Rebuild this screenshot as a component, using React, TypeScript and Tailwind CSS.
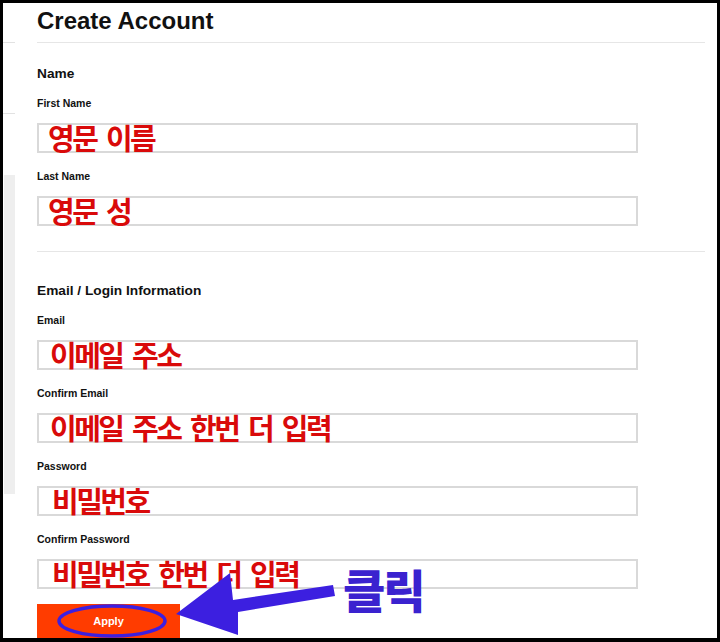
import React from "react";

type FieldProps = {
  label: string;
  note: string;
  notePad: string;
  labelGap: string;
};

const kr = "font-['Noto_Sans_CJK_KR',sans-serif]";

function Field({ label, note, notePad, labelGap }: FieldProps) {
  return (
    <>
      <div className={`${labelGap} h-[13px] text-[10.5px] font-bold leading-[13px] text-[#111]`}>{label}</div>
      <div className={`mt-[13px] h-[30px] w-[601px] border-2 border-[#d9d9d9] ${notePad}`}>
        <span className={`${kr} block whitespace-nowrap text-[29px] font-bold leading-[25px] tracking-[-2.5px] [word-spacing:5.5px] text-[#d90a0a]`}>
          {note}
        </span>
      </div>
    </>
  );
}

export default function App() {
  return (
    <div className="relative flex h-[642px] w-[720px] overflow-hidden border-t-[3px] border-r-[3px] border-b-[4px] border-l-[3px] border-black bg-white font-['Liberation_Sans',Arial,sans-serif]">
      {/* left rail of the page behind */}
      <div className="flex w-[12px] shrink-0 flex-col">
        <div className="mt-[39px] h-px bg-[#e2e2e2]" />
        <div className="mt-[70px] h-px bg-[#e2e2e2]" />
        <div className="mt-[61px] ml-px h-[319px] bg-[#eeeeee]" />
      </div>

      <div className="ml-[22px] flex w-[668px] flex-col pt-[4px]">
        <h1 className="h-[28px] text-[24px] font-bold leading-[28px] text-[#111]">Create Account</h1>
        <div className="mt-[7px] h-px bg-[#e6e6e6]" />

        <h2 className="mt-[23px] h-[16px] text-[13.7px] font-bold leading-[16px] text-[#111]">Name</h2>
        <Field label="First Name" note="영문 이름" notePad="pl-[9px]" labelGap="mt-[15px]" />
        <Field label="Last Name" note="영문 성" notePad="pl-[9px]" labelGap="mt-[17px]" />

        <div className="mt-[25px] h-px bg-[#e6e6e6]" />

        <h2 className="mt-[31px] h-[16px] text-[13.7px] font-bold leading-[16px] text-[#111]">Email / Login Information</h2>
        <Field label="Email" note="이메일 주소" notePad="pl-[11px]" labelGap="mt-[15px]" />
        <Field label="Confirm Email" note="이메일 주소 한번 더 입력" notePad="pl-[11px]" labelGap="mt-[17px]" />
        <Field label="Password" note="비밀번호" notePad="pl-[13px]" labelGap="mt-[17px]" />
        <Field label="Confirm Password" note="비밀번호 한번 더 입력" notePad="pl-[13px]" labelGap="mt-[17px]" />

        <button className="mt-[15px] flex h-[34px] w-[143px] items-center justify-center bg-[#ff3c00] text-[11px] font-bold text-white">
          Apply
        </button>
      </div>

      {/* annotation overlay */}
      <svg
        className="pointer-events-none absolute -top-[3px] -left-[3px] h-[642px] w-[720px]"
        viewBox="0 0 720 642"
      >
        <ellipse cx="112" cy="621" rx="53" ry="15" fill="none" stroke="#3c1fe0" strokeWidth="3.5" />
        <polygon
          points="176,614 230,573 233,600 333,585 335,596 238,612 238,635"
          fill="#3c1fe0"
        />
      </svg>
      <span
        className={`${kr} absolute top-[562px] left-[340px] text-[46px] font-black leading-[46px] tracking-[-2px] text-[#3a22cf]`}
      >
        클릭
      </span>
    </div>
  );
}
